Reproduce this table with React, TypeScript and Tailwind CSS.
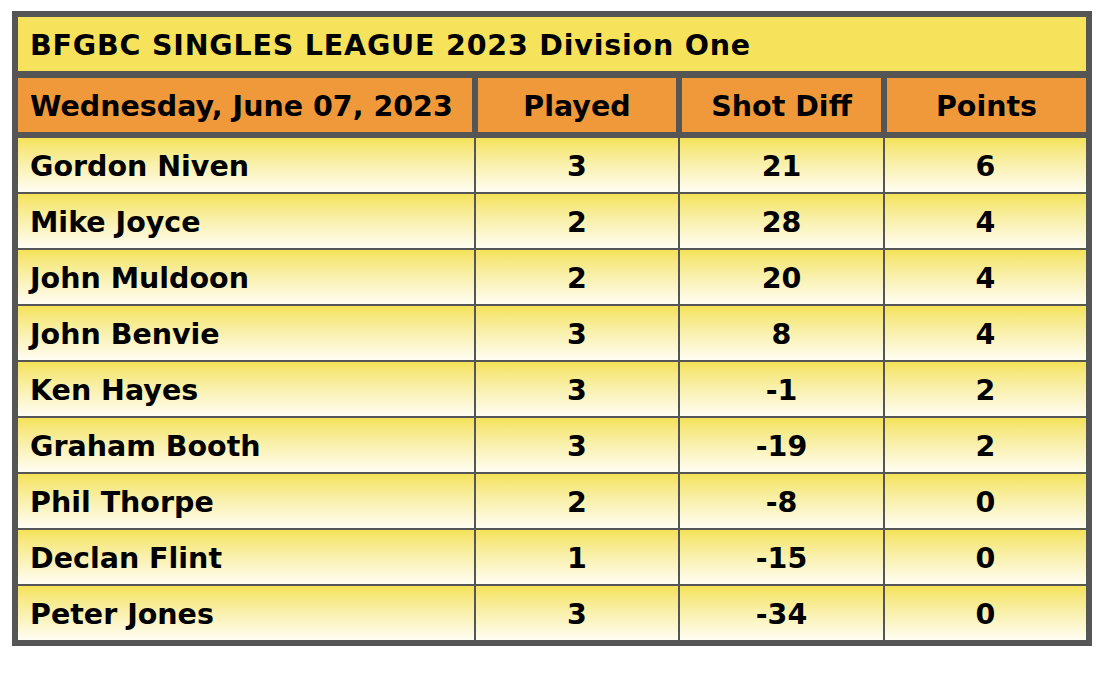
const rows = [
  { name: 'Gordon Niven', played: 3, diff: 21, points: 6 },
  { name: 'Mike Joyce', played: 2, diff: 28, points: 4 },
  { name: 'John Muldoon', played: 2, diff: 20, points: 4 },
  { name: 'John Benvie', played: 3, diff: 8, points: 4 },
  { name: 'Ken Hayes', played: 3, diff: -1, points: 2 },
  { name: 'Graham Booth', played: 3, diff: -19, points: 2 },
  { name: 'Phil Thorpe', played: 2, diff: -8, points: 0 },
  { name: 'Declan Flint', played: 1, diff: -15, points: 0 },
  { name: 'Peter Jones', played: 3, diff: -34, points: 0 },
];

const cell = 'h-[54px] pt-[4px] flex items-center bg-gradient-to-b from-[#f5e257] to-[#fffdf2]';
const head = 'h-[54px] pt-[4px] bg-[#f0993a] flex items-center';

export default function App() {
  return (
    <div
      className="w-[1106px] h-[674px] bg-white pt-[11px] pl-[12px] text-black font-bold text-[28.5px] leading-none"
      style={{ fontFamily: '"DejaVu Sans", "Liberation Sans", sans-serif' }}
    >
      <div className="w-[1080px] border-[6px] border-[#555555] bg-[#555555] flex flex-col">
        <div className="h-[54px] pt-[4px] bg-[#f6e35b] flex items-center pl-[12px] tracking-[0.8px]">
          BFGBC SINGLES LEAGUE 2023 Division One
        </div>

        <div className="mt-[7px] grid grid-cols-[454px_198px_199px_199px] gap-x-[6px]">
          <div className={`${head} pl-[12px]`}>Wednesday, June 07, 2023</div>
          <div className={`${head} justify-center`}>Played</div>
          <div className={`${head} justify-center`}>Shot Diff</div>
          <div className={`${head} justify-center`}>Points</div>
        </div>

        <div className="mt-[6px] flex flex-col gap-y-[2px]">
          {rows.map((r) => (
            <div key={r.name} className="grid grid-cols-[456px_202px_203px_201px] gap-x-[2px]">
              <div className={`${cell} pl-[12px]`}>{r.name}</div>
              <div className={`${cell} justify-center`}>{r.played}</div>
              <div className={`${cell} justify-center`}>{r.diff}</div>
              <div className={`${cell} justify-center`}>{r.points}</div>
            </div>
          ))}
        </div>
      </div>
    </div>
  );
}
